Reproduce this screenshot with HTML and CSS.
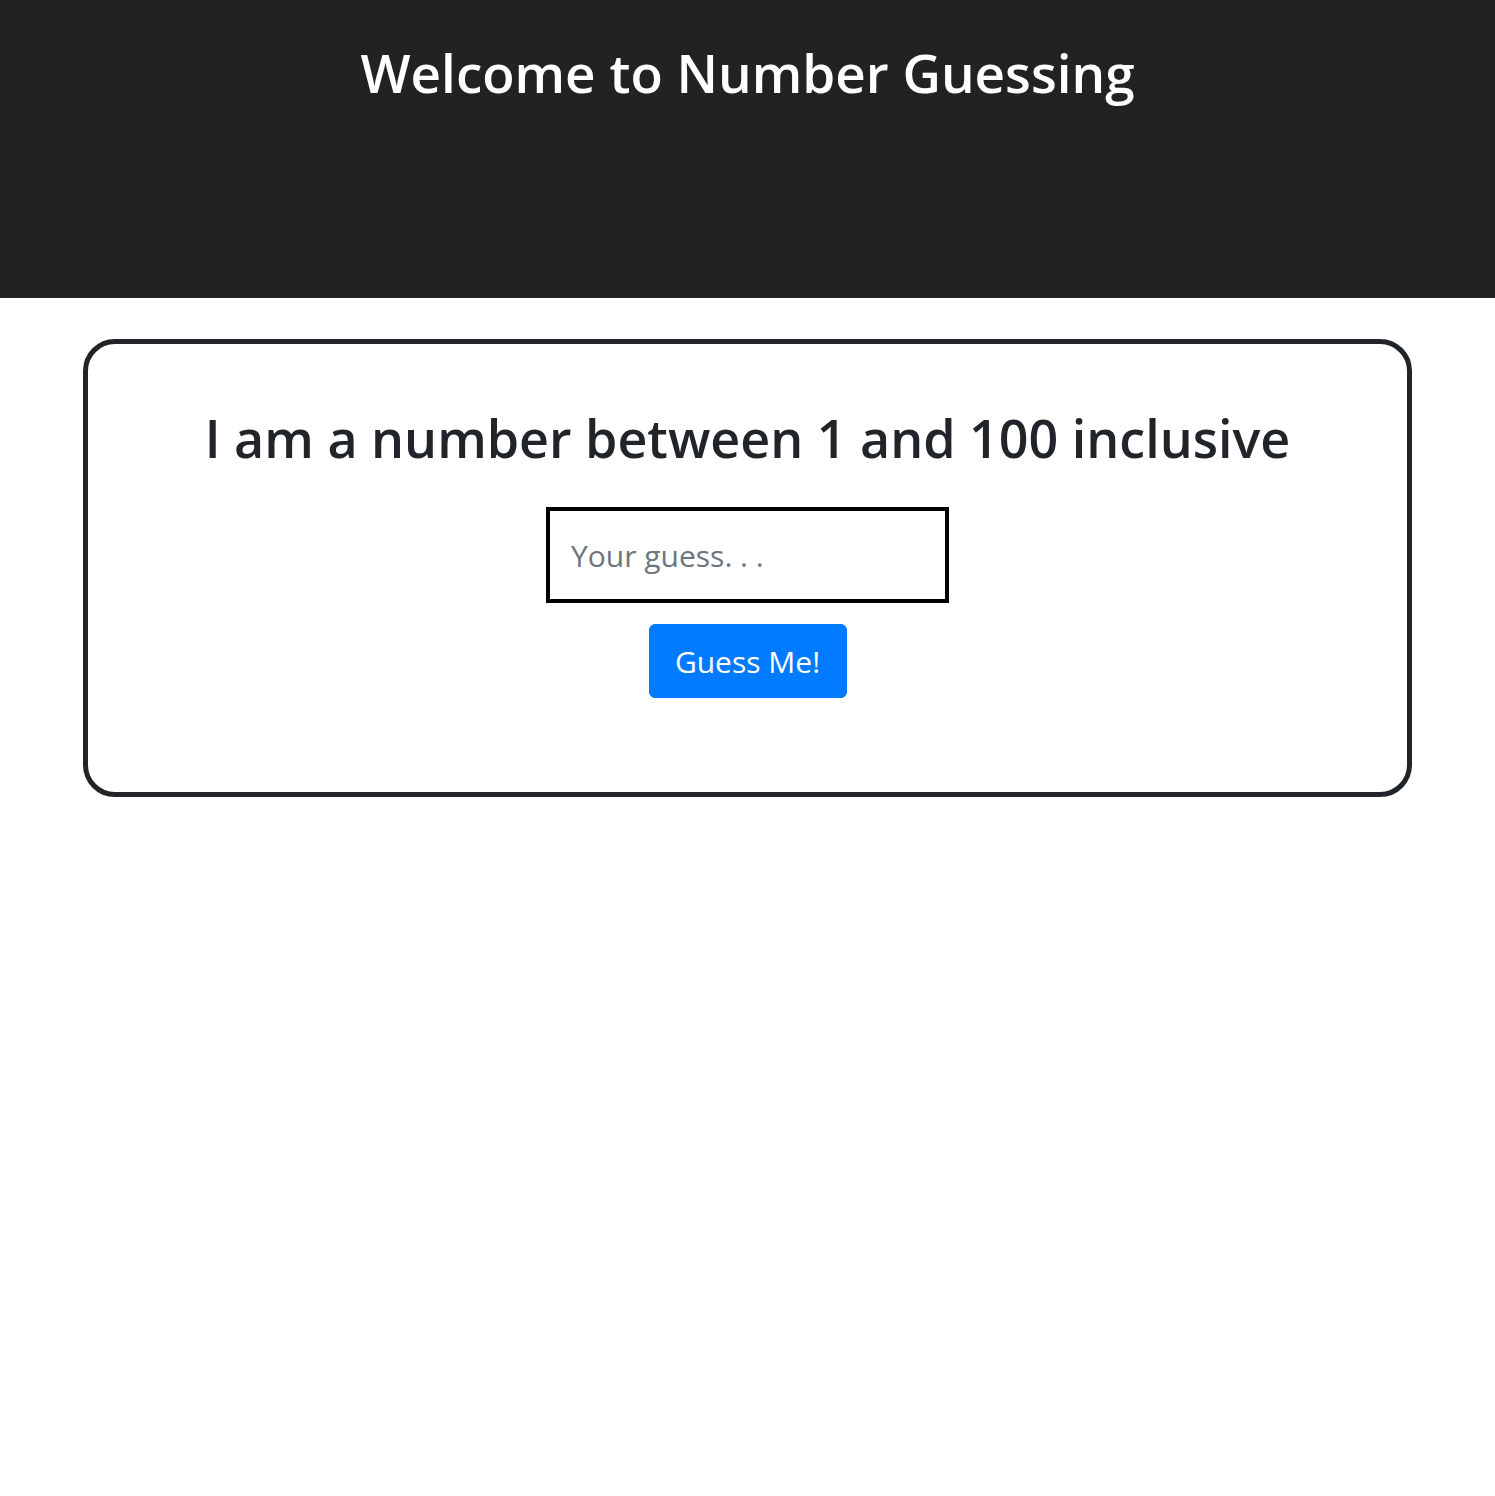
FILE: index.html
```html
<!DOCTYPE html>
<html lang="en">
<head>
<meta charset="utf-8">
<title>Number Guessing</title>
<link rel="stylesheet" href="styles.css">
</head>
<body>
<header class="hero">
  <h1 class="hero-title">Welcome to Number Guessing</h1>
</header>
<main class="game-card">
  <h2 class="game-prompt">I am a number between 1 and 100 inclusive</h2>
  <input class="guess-input" type="text" placeholder="Your guess. . .">
  <button class="guess-btn" type="button">Guess Me!</button>
</main>
</body>
</html>
```
FILE: styles.css
```css
html, body {
  margin: 0;
  padding: 0;
  background: #fff;
}
body {
  font-family: "Open Sans", "Noto Sans", "Liberation Sans", sans-serif;
  color: #212529;
}
.hero {
  background: #222222;
  height: 298px;
  box-sizing: border-box;
  padding-top: 41px;
  text-align: center;
}
.hero-title {
  margin: 0;
  color: #fff;
  font-size: 53px;
  font-weight: 600;
  line-height: 1.2;
}
.game-card {
  margin: 41px 83px 0;
  border: 5px solid #212529;
  border-radius: 32px;
  height: 458px;
  box-sizing: border-box;
  display: flex;
  flex-direction: column;
  align-items: center;
  padding-top: 63px;
}
.game-prompt {
  margin: 0;
  font-size: 52px;
  font-weight: 600;
  line-height: 1.2;
  color: #212529;
}
.guess-input {
  margin-top: 38px;
  width: 403px;
  height: 96px;
  box-sizing: border-box;
  border: 4px solid #000;
  padding: 0 21px;
  font-family: inherit;
  font-size: 30px;
  color: #495057;
  outline: none;
}
.guess-input::placeholder {
  color: #6c757d;
}
.guess-btn {
  margin-top: 21px;
  width: 198px;
  height: 74px;
  background: #007bff;
  color: #fff;
  border: 1px solid #007bff;
  border-radius: 6px;
  font-family: inherit;
  font-size: 30px;
  cursor: pointer;
}
```
